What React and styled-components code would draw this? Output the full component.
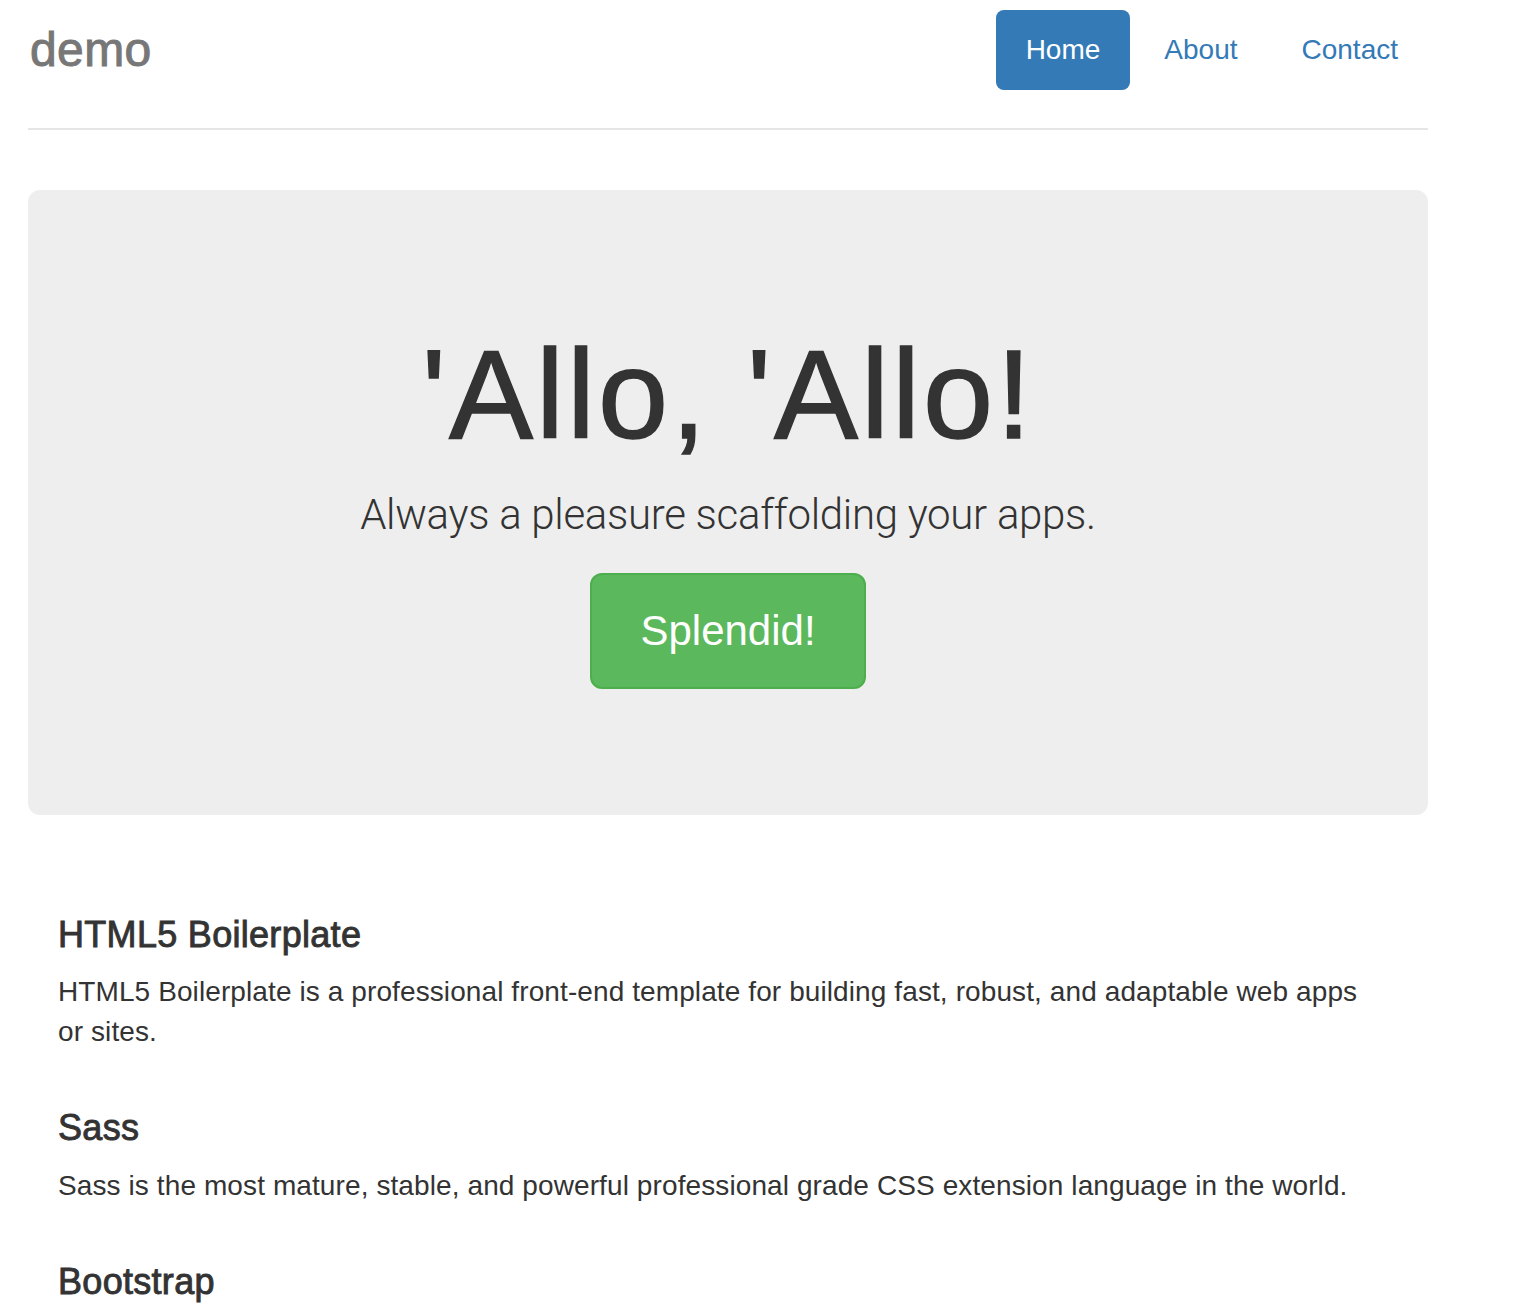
import styled, { createGlobalStyle } from "styled-components";

const GlobalStyle = createGlobalStyle`
  html, body {
    margin: 0;
    padding: 0;
    background: #fff;
  }
  body {
    font-family: "Liberation Sans", Arial, Helvetica, sans-serif;
    font-size: 28px;
    line-height: 1.42857;
    color: #333;
  }
  * {
    box-sizing: border-box;
  }
`;

const Container = styled.div`
  width: 1400px;
  margin-left: 28px;
  padding-top: 10px;
`;

const Header = styled.header`
  display: flex;
  justify-content: space-between;
  align-items: flex-start;
  padding-bottom: 38px;
  border-bottom: 2px solid #e5e5e5;
`;

// medium weight (Helvetica Neue 500) faked with a thin stroke
const Brand = styled.h3`
  margin: 0;
  padding-left: 2px;
  font-size: 48px;
  line-height: 80px;
  font-weight: 400;
  letter-spacing: 0.4px;
  color: #777;
  -webkit-text-stroke: 1px #777;
`;

const Nav = styled.ul`
  display: flex;
  gap: 4px;
  margin: 0;
  padding: 0;
  list-style: none;
`;

const Pill = styled.a`
  display: block;
  padding: 20px 30px;
  font-size: 28px;
  line-height: 40px;
  border-radius: 8px;
  text-decoration: none;
  color: ${(p) => (p.$active ? "#fff" : "#337ab7")};
  background: ${(p) => (p.$active ? "#337ab7" : "transparent")};
`;

const Jumbotron = styled.section`
  margin-top: 60px;
  padding: 96px 120px;
  background: #eee;
  border-radius: 12px;
  text-align: center;
`;

const Title = styled.h1`
  margin: 40px 0 20px;
  font-size: 126px;
  line-height: 1.1;
  font-weight: 400;
  letter-spacing: 3px;
  color: #333;
  -webkit-text-stroke: 1.5px #333;
`;

const Lead = styled.p`
  margin: 0 0 28px;
  font-family: Roboto, "Liberation Sans", sans-serif;
  font-size: 42px;
  line-height: 60px;
  font-weight: 300;
  letter-spacing: -0.3px;
  color: #333;
`;

const ButtonRow = styled.div`
  display: flex;
  justify-content: center;
  margin-bottom: 30px;
`;

const SuccessButton = styled.a`
  display: inline-block;
  padding: 28px 48px;
  font-size: 42px;
  line-height: 56px;
  color: #fff;
  background: #5cb85c;
  border: 2px solid #4cae4c;
  border-radius: 12px;
  text-decoration: none;
`;

const Marketing = styled.section`
  display: flex;
  flex-direction: column;
  gap: 56px;
  margin: 80px 0;
  padding: 20px 60px 0 30px;
`;

const Feature = styled.div``;

const Heading = styled.h4`
  margin: 0 0 18px;
  font-size: 36px;
  line-height: 1.1;
  font-weight: 400;
  letter-spacing: 0.3px;
  color: #333;
  -webkit-text-stroke: 0.9px #333;
`;

const Text = styled.p`
  margin: 0;
  font-size: 28px;
  line-height: 40px;
  letter-spacing: 0.1px;
`;

const features = [
  {
    title: "HTML5 Boilerplate",
    text: "HTML5 Boilerplate is a professional front-end template for building fast, robust, and adaptable web apps or sites.",
  },
  {
    title: "Sass",
    text: "Sass is the most mature, stable, and powerful professional grade CSS extension language in the world.",
  },
  {
    title: "Bootstrap",
    text: "Sleek, intuitive, and powerful mobile first front-end framework for faster and easier web development.",
  },
  {
    title: "Modernizr",
    text: "Modernizr is an open-source JavaScript library that helps you build the next generation of HTML5 and CSS3-powered websites.",
  },
];

export default function App() {
  return (
    <>
      <GlobalStyle />
      <Container>
        <Header>
          <Brand>demo</Brand>
          <nav>
            <Nav>
              <li><Pill href="#" $active>Home</Pill></li>
              <li><Pill href="#">About</Pill></li>
              <li><Pill href="#">Contact</Pill></li>
            </Nav>
          </nav>
        </Header>

        <Jumbotron>
          <Title>'Allo, 'Allo!</Title>
          <Lead>Always a pleasure scaffolding your apps.</Lead>
          <ButtonRow>
            <SuccessButton href="#">Splendid!</SuccessButton>
          </ButtonRow>
        </Jumbotron>

        <Marketing>
          {features.map((f) => (
            <Feature key={f.title}>
              <Heading>{f.title}</Heading>
              <Text>{f.text}</Text>
            </Feature>
          ))}
        </Marketing>
      </Container>
    </>
  );
}
